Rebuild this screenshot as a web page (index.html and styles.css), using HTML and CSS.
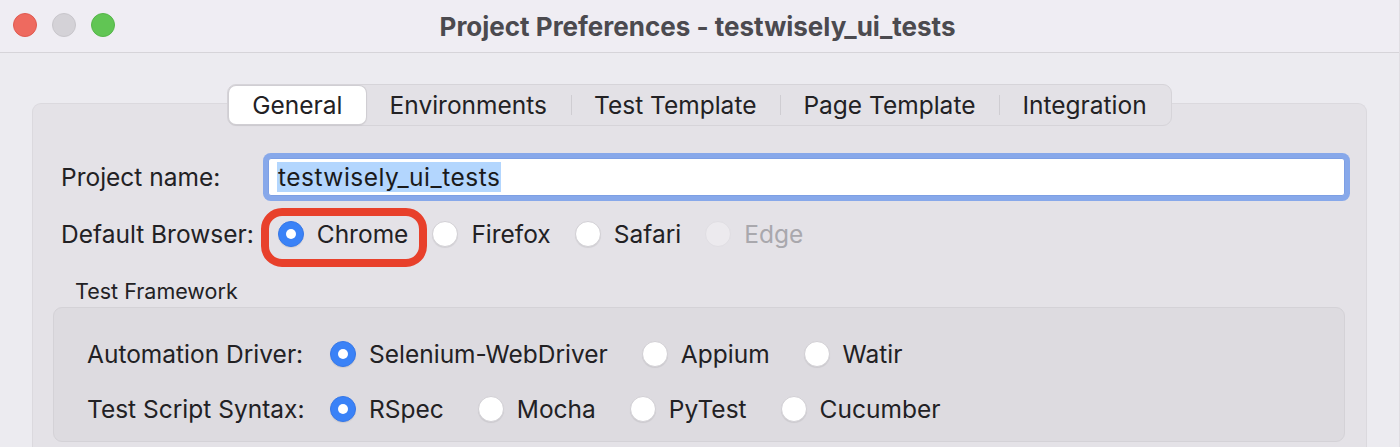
FILE: index.html
```html
<!DOCTYPE html>
<html lang="en">
<head>
    <meta charset="UTF-8">
    <meta name="viewport" content="width=device-width, initial-scale=1.0">
    <title>Project Preferences</title>
    <link rel="stylesheet" href="styles.css">
</head>
<body>
    <div class="window">
        <div class="title-bar">
            <div class="lights">
                <span class="light red"></span>
                <span class="light gray"></span>
                <span class="light green"></span>
            </div>
            <div class="title">Project Preferences - testwisely_ui_tests</div>
        </div>

        <div class="content">
            <div class="tabs">
                <div class="tab active">General</div>
                <div class="tab">Environments</div>
                <div class="tab">Test Template</div>
                <div class="tab">Page Template</div>
                <div class="tab">Integration</div>
            </div>

            <div class="panel">
                <div class="form-row name-row">
                    <div class="label name-label">Project name:</div>
                    <div class="text-field"><span class="selected">testwisely_ui_tests</span></div>
                </div>

                <div class="form-row browser-row">
                    <div class="label">Default Browser:</div>
                    <div class="radio-group">
                        <div class="radio-item highlighted">
                            <span class="radio checked"></span>Chrome
                            <span class="annotation"></span>
                        </div>
                        <div class="radio-item"><span class="radio"></span>Firefox</div>
                        <div class="radio-item"><span class="radio"></span>Safari</div>
                        <div class="radio-item disabled"><span class="radio"></span>Edge</div>
                    </div>
                </div>

                <div class="group-title">Test Framework</div>
                <div class="group-box">
                    <div class="form-row group-row">
                        <div class="label group-label">Automation Driver:</div>
                        <div class="radio-group wide">
                            <div class="radio-item"><span class="radio checked"></span>Selenium-WebDriver</div>
                            <div class="radio-item"><span class="radio"></span>Appium</div>
                            <div class="radio-item"><span class="radio"></span>Watir</div>
                        </div>
                    </div>
                    <div class="form-row group-row">
                        <div class="label group-label">Test Script Syntax:</div>
                        <div class="radio-group wide">
                            <div class="radio-item"><span class="radio checked"></span>RSpec</div>
                            <div class="radio-item"><span class="radio"></span>Mocha</div>
                            <div class="radio-item"><span class="radio"></span>PyTest</div>
                            <div class="radio-item"><span class="radio"></span>Cucumber</div>
                        </div>
                    </div>
                </div>
            </div>
        </div>
    </div>
</body>
</html>
```

FILE: styles.css
```css
html, body {
    margin: 0;
    padding: 0;
    height: 447px;
    overflow: hidden;
}

body {
    font-family: Inter, "Noto Sans", sans-serif;
    color: #222124;
    background-color: #ecebf0;
}

.window {
    height: 447px;
    overflow: hidden;
    border-right: 1px solid #e0dee3;
    background-color: #ecebf0;
}

.title-bar {
    height: 52px;
    border-bottom: 1px solid #d6d4d9;
    background-color: #efedf3;
    display: flex;
    align-items: center;
    justify-content: center;
    position: relative;
}

.lights {
    position: absolute;
    left: 13px;
    top: 13px;
    display: flex;
    gap: 15px;
}

.light {
    width: 24px;
    height: 24px;
    border-radius: 50%;
    box-sizing: border-box;
}

.red {
    background-color: #ee6a5f;
    border: 1px solid #e05a50;
}

.gray {
    background-color: #d4d2d7;
    border: 1px solid #c8c6cb;
}

.green {
    background-color: #61c554;
    border: 1px solid #55b649;
}

.title {
    font-size: 26px;
    font-weight: 700;
    color: #4b4a4f;
    margin-left: -4px;
}

.content {
    padding: 31px 32px 0 32px;
}

.tabs {
    display: flex;
    width: fit-content;
    margin: 0 auto -23px;
    height: 42px;
    box-sizing: border-box;
    padding: 1px;
    background-color: #e3e1e6;
    border: 1px solid #d6d4d9;
    border-radius: 9px;
    position: relative;
    z-index: 1;
}

.tab {
    display: flex;
    align-items: center;
    padding: 0 23.5px;
    font-size: 24.5px;
    position: relative;
}

.tab + .tab::before {
    content: "";
    position: absolute;
    left: 0;
    top: 9px;
    bottom: 9px;
    width: 1px;
    background-color: #cfcdd2;
}

.tab.active {
    background-color: #ffffff;
    border-radius: 7px;
    box-shadow: 0 0 0 1px #d0ced3, 0 1px 2px rgba(0, 0, 0, 0.15);
}

.tab.active + .tab::before {
    display: none;
}

.panel {
    background-color: #e4e2e7;
    border: 1px solid #dbd9de;
    border-bottom: none;
    border-radius: 9px 9px 0 0;
    padding: 48px 21px 0 28px;
    height: 322px;
}

.form-row {
    display: flex;
    align-items: center;
}

.label {
    font-size: 24.5px;
}

.name-label {
    width: 207px;
}

.text-field {
    flex: 1;
    height: 38px;
    margin: 6px 0;
    box-sizing: border-box;
    background-color: #ffffff;
    border: 1px solid #7d9fe4;
    border-radius: 3px;
    box-shadow: 0 0 0 5px #87a8ea;
    display: flex;
    align-items: center;
    padding-left: 8px;
    font-size: 24.5px;
    color: #1a1a1a;
}

.selected {
    background-color: #b3d6fe;
    padding: 1px 1px;
    line-height: 28px;
    letter-spacing: 0.5px;
}

.browser-row {
    height: 40px;
    margin-top: 12px;
}

.radio-group {
    display: flex;
    align-items: center;
    gap: 24px;
    margin-left: 24px;
}

.radio-group.wide {
    gap: 34px;
    margin-left: 0;
}

.radio-item {
    display: flex;
    align-items: center;
    gap: 13px;
    font-size: 24.5px;
    position: relative;
}

.radio {
    width: 26px;
    height: 26px;
    border-radius: 50%;
    box-sizing: border-box;
    background-color: #ffffff;
    border: 1px solid #d2d0d5;
    box-shadow: 0 1px 1px rgba(0, 0, 0, 0.08);
    flex-shrink: 0;
}

.radio.checked {
    background-color: #3a82f7;
    border-color: #3577e8;
    display: flex;
    align-items: center;
    justify-content: center;
}

.radio.checked::after {
    content: "";
    width: 10px;
    height: 10px;
    border-radius: 50%;
    background-color: #ffffff;
}

.disabled {
    color: #a9a8ad;
}

.disabled .radio {
    background-color: #eceaee;
    border-color: #e0dee3;
    box-shadow: none;
}

.annotation {
    position: absolute;
    left: -17px;
    top: -11px;
    right: -19px;
    bottom: -18px;
    border: 8px solid #e8402b;
    border-radius: 21px;
}

.group-title {
    font-size: 21.5px;
    margin: 24px 0 0 14px;
}

.group-box {
    margin: 3px 0 0 -8px;
    background-color: #dddbe0;
    border: 1px solid #d4d2d7;
    border-radius: 9px;
    padding: 26px 0 12px 33px;
}

.group-label {
    width: 243px;
}

.group-row {
    height: 40px;
}

.group-row + .group-row {
    margin-top: 15px;
}
```
